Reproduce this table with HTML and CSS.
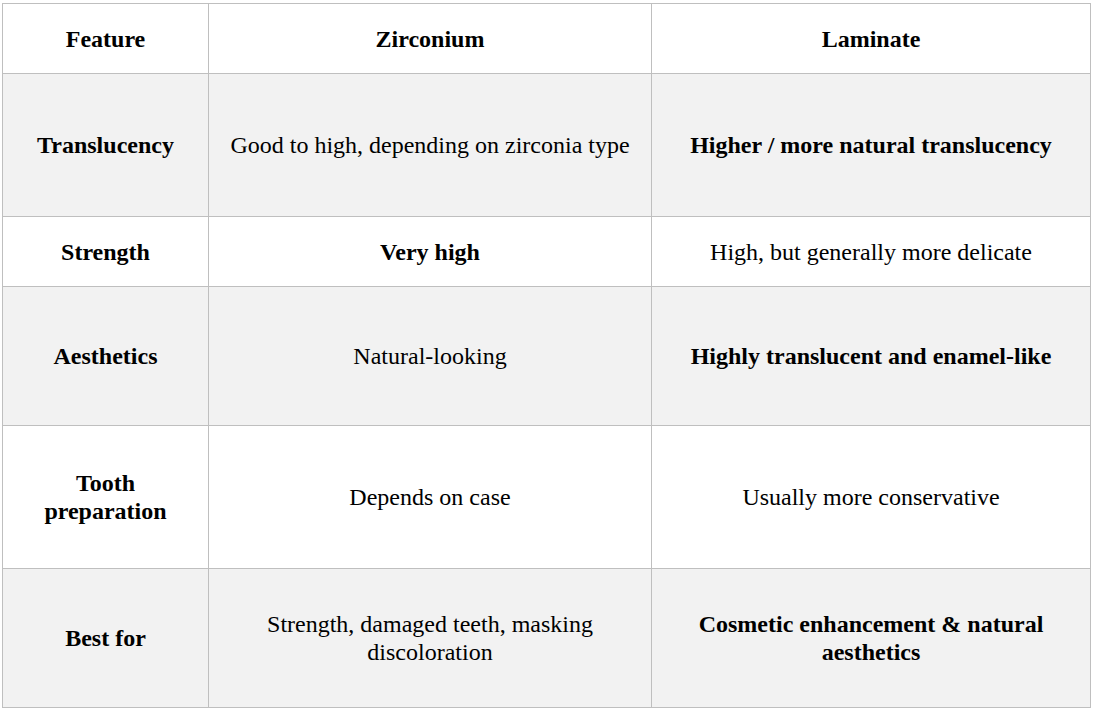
FILE: index.html
```html
<!DOCTYPE html>
<html>
<head>
<meta charset="utf-8">
<link rel="stylesheet" href="styles.css">
</head>
<body>
<table class="cmp">
  <colgroup>
    <col class="c1">
    <col class="c2">
    <col class="c3">
  </colgroup>
  <thead>
    <tr class="r-head">
      <th>Feature</th>
      <th>Zirconium</th>
      <th>Laminate</th>
    </tr>
  </thead>
  <tbody>
    <tr class="r1 alt">
      <th>Translucency</th>
      <td>Good to high, depending on zirconia type</td>
      <td><strong>Higher / more natural translucency</strong></td>
    </tr>
    <tr class="r2">
      <th>Strength</th>
      <td><strong>Very high</strong></td>
      <td>High, but generally more delicate</td>
    </tr>
    <tr class="r3 alt">
      <th>Aesthetics</th>
      <td>Natural-looking</td>
      <td><strong>Highly translucent and enamel-like</strong></td>
    </tr>
    <tr class="r4">
      <th>Tooth<br>preparation</th>
      <td>Depends on case</td>
      <td>Usually more conservative</td>
    </tr>
    <tr class="r5 alt">
      <th>Best for</th>
      <td>Strength, damaged teeth, masking<br>discoloration</td>
      <td><strong>Cosmetic enhancement &amp; natural<br>aesthetics</strong></td>
    </tr>
  </tbody>
</table>
</body>
</html>
```

FILE: styles.css
```css
html, body {
  background: #ffffff;
}
body {
  margin: 3px 0 0 2px;
  font-family: "Liberation Serif", "Times New Roman", serif;
  font-size: 24px;
  line-height: 28px;
  color: #000000;
}
.cmp {
  border-collapse: collapse;
  table-layout: fixed;
  width: 1088px;
}
.c1 { width: 206px; }
.c2 { width: 443px; }
.c3 { width: 439px; }
.cmp th,
.cmp td {
  border: 1px solid #bfbfbf;
  text-align: center;
  vertical-align: middle;
  padding: 0 6px;
}
.cmp th,
.cmp strong {
  font-weight: bold;
}
.alt {
  background: #f2f2f2;
}
.r-head { height: 70px; }
.r1 { height: 143px; }
.r2 { height: 70px; }
.r3 { height: 139px; }
.r4 { height: 143px; }
.r5 { height: 139px; }
```
